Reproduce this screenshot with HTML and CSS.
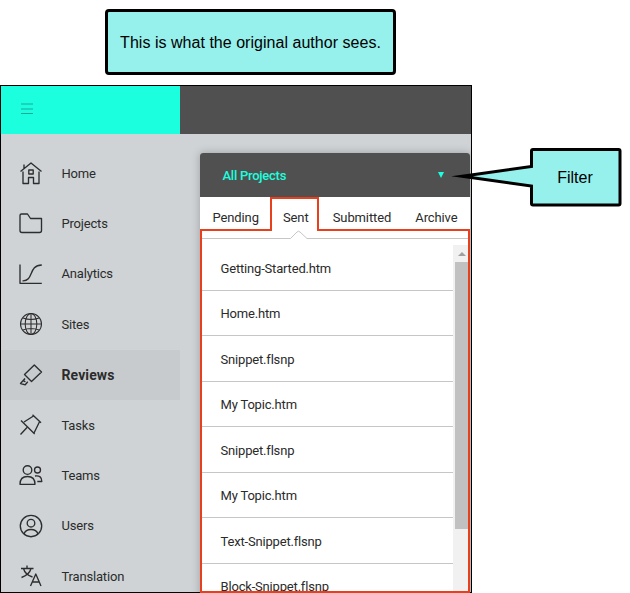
FILE: index.html
```html
<!DOCTYPE html>
<html lang="en">
<head>
<meta charset="utf-8">
<title>Reviews</title>
<link rel="stylesheet" href="styles.css">
</head>
<body>
<div class="note">This is what the original author sees.</div>
<div class="app">
  <header class="topbar">
    <div class="brand">
      <svg class="burger" width="12" height="12" viewBox="0 0 12 12"><path d="M0 1h12M0 6h12M0 10.500h12"/></svg>
    </div>
  </header>
  <div class="main">
    <nav class="sidebar">
      <a class="item"><svg class="icon" viewBox="0 0 24 24"><path d="M1.500 10.500 12 2 22.500 10.500M5 7.500V3.500M4 10.500V22.500h5.500v-6h5v6H20V10.500M9.800 9h4.400v4H9.800z"/></svg><span>Home</span></a>
      <a class="item"><svg class="icon" viewBox="0 0 24 24"><path d="M1 4.500Q1 3 2.500 3H8.500L11.500 7.500H22.500V19.500Q22.500 21.500 20.500 21.500H3Q1 21.500 1 19.500z"/></svg><span>Projects</span></a>
      <a class="item"><svg class="icon" viewBox="0 0 24 24"><path d="M1 2.500V21.300H22.800M3.500 18.800C15 19.500 9 3 22.800 3"/></svg><span>Analytics</span></a>
      <a class="item"><svg class="icon thin" viewBox="0 0 24 24"><circle cx="12" cy="12" r="10.500"/><ellipse cx="12" cy="12" rx="5.800" ry="10.500"/><path d="M12 1.500v21M1.500 12h21M4 6Q12 9 20 6M4 18Q12 15 20 18"/></svg><span>Sites</span></a>
      <a class="item current"><svg class="icon" viewBox="0 0 24 24"><path d="M15.300 2 22.500 9 12.500 18.500 5.500 11.500zM6 15.500 1.500 20.500l4.700 1.300L8.800 18.800M6 15.500Q3.500 18.500 6.500 18.700"/></svg><span>Reviews</span></a>
      <a class="item"><svg class="icon" viewBox="0 0 24 24"><path d="M13.500 1.800 22 9.800M14.500 3 5 9M20.500 8.700 15 20M2 7.500 15.700 21M8 14.500 1.500 21.500"/></svg><span>Tasks</span></a>
      <a class="item"><svg class="icon" viewBox="0 0 24 24"><circle cx="8.500" cy="7" r="4.300"/><path d="M1 21.300Q1 13.500 8.500 13.500T16 21.300z"/><circle cx="18.500" cy="7" r="3"/><path d="M16 13Q22.800 12 22.800 18.500H18.300"/></svg><span>Teams</span></a>
      <a class="item"><svg class="icon" viewBox="0 0 24 24"><circle cx="12" cy="12" r="10.700"/><circle cx="12" cy="9.200" r="3.800"/><path d="M5 20Q6.500 15.500 12 15.500T19 20"/></svg><span>Users</span></a>
      <a class="item"><svg class="icon" viewBox="0 0 24 24"><path d="M2 4.500h12.500M8 1.500v3M4.500 4.500Q6 10.500 13.500 13M12 4.500Q10.500 10.500 2.500 13.500M11.500 22 16.800 10 22 22M13.300 18h7"/></svg><span>Translation</span></a>
    </nav>
    <section class="panel">
      <div class="filter"><span>All Projects</span><svg class="caret" width="6" height="6" viewBox="0 0 6 6"><path d="M0 0h6L3 6z"/></svg></div>
      <div class="tabs"><span>Pending</span><span>Sent</span><span>Submitted</span><span>Archive</span></div>
      <div class="divider"><svg width="270" height="15" viewBox="0 0 270 15"><path d="M2 8.500H90.500L97 2Q98.500 .5 100 2L107 8.500H268"/></svg></div>
      <div class="content">
        <div class="list">
          <div class="row">Getting-Started.htm</div>
          <div class="row">Home.htm</div>
          <div class="row">Snippet.flsnp</div>
          <div class="row">My Topic.htm</div>
          <div class="row">Snippet.flsnp</div>
          <div class="row">My Topic.htm</div>
          <div class="row">Text-Snippet.flsnp</div>
          <div class="row">Block-Snippet.flsnp</div>
        </div>
        <div class="scrollbar">
          <svg class="arrow" width="8" height="4" viewBox="0 0 8 4"><path d="M0 4 4 0l4 4z"/></svg>
          <div class="thumb"></div>
        </div>
      </div>
    </section>
  </div>
</div>
<svg class="outline" width="270" height="396" viewBox="0 0 270 396"><path d="M1 33H71V1H118V33H269V395H1z"/></svg>
<div class="callout">
  <svg class="bubble" width="172" height="62" viewBox="0 0 172 62"><path d="M81.500 5Q81.500 3.500 83 3.500H168.500Q170 3.500 170 5V57.500Q170 59 168.500 59H83Q81.500 59 81.500 57.500V40L12 30.300 81.500 20.500z"/></svg>
  <span class="callout-text">Filter</span>
</div>
</body>
</html>
```
FILE: styles.css
```css
* { box-sizing: border-box; }
body {
  margin: 0;
  width: 630px;
  height: 593px;
  overflow: hidden;
  position: relative;
  background: #fff;
  color: #2b2b2b;
  font: 13px/16px Roboto, sans-serif;
  letter-spacing: -.18px;
}
svg { display: block; fill: none; }
.note {
  width: 291px;
  height: 66px;
  margin: 9px 0 10px 105px;
  border: 3px solid #000;
  border-radius: 4px;
  background: #96f0ec;
  color: #000;
  font: 16px/61px "Liberation Sans", Arial, sans-serif;
  letter-spacing: .03px;
  text-align: center;
  white-space: nowrap;
}
.app {
  width: 472px;
  height: 508px;
  border: 1px solid #000;
  background: #cfd3d6;
  overflow: hidden;
}
.topbar { height: 48px; background: #505050; }
.brand { width: 179px; height: 48px; padding: 17px 0 0 20px; background: #1cffde; }
.burger { stroke: #16ab98; stroke-width: 1.200; }
.main { display: flex; height: 458px; }
.sidebar { width: 179px; padding-top: 14.400px; flex: none; }
.item {
  display: flex;
  align-items: center;
  gap: 18px;
  height: 50.400px;
  padding: 0 0 1px 18px;
}
.item.current { background: #c7cbce; font-weight: 700; font-size: 14px; letter-spacing: .1px; }
.icon { width: 24px; height: 24px; stroke: #2d2d2d; stroke-width: 1.350; stroke-linejoin: round; }
.icon.thin { stroke-width: 1.050; }
.item span { padding: 1px 0 0 .5px; }
.item.current span { padding-top: 0; }
.panel {
  width: 270px;
  margin: 19px 0 0 20px;
  flex: none;
  height: 450px;
  background: #fff;
  border-radius: 3px 3px 0 0;
  box-shadow: 0 0 8px rgba(0, 0, 0, .25);
}
.filter {
  display: flex;
  justify-content: space-between;
  align-items: center;
  height: 44px;
  padding: 1px 26px 0 22.500px;
  border-radius: 3px 3px 0 0;
  background: #505050;
  color: #1cffde;
  font-weight: 500;
  letter-spacing: -.25px;
}
.caret { fill: #1cffde; margin-bottom: 1px; }
.tabs {
  display: flex;
  justify-content: space-between;
  height: 33px;
  padding: 13px 12.500px 0;
  letter-spacing: -.12px;
}
.divider { height: 15px; }
.divider svg { stroke: #c6c6c6; }
.content { display: flex; height: 360px; padding: 0 2px; }
.list { flex: 1; }
.row {
  height: 45.500px;
  padding: 15.600px 0 0 18.500px;
  border-bottom: 1px solid #c6c6c6;
}
.scrollbar { width: 15px; padding-left: 2px; background: #f1f1f1; }
.arrow { margin: 7px 0 6px 2.500px; fill: #a0a0a0; }
.thumb { height: 267px; background: #c1c1c1; }
.outline { position: absolute; left: 200px; top: 197px; stroke: #e8401c; stroke-width: 2; }
.callout { position: absolute; left: 450px; top: 146px; width: 172px; height: 62px; }
.bubble { fill: #96f0ec; stroke: #000; stroke-width: 3; stroke-miterlimit: 10; }
.callout-text {
  position: absolute;
  left: 80px;
  top: 23px;
  width: 90px;
  color: #000;
  font: 16px/18px "Liberation Sans", Arial, sans-serif;
  letter-spacing: 0;
  text-align: center;
}
```
